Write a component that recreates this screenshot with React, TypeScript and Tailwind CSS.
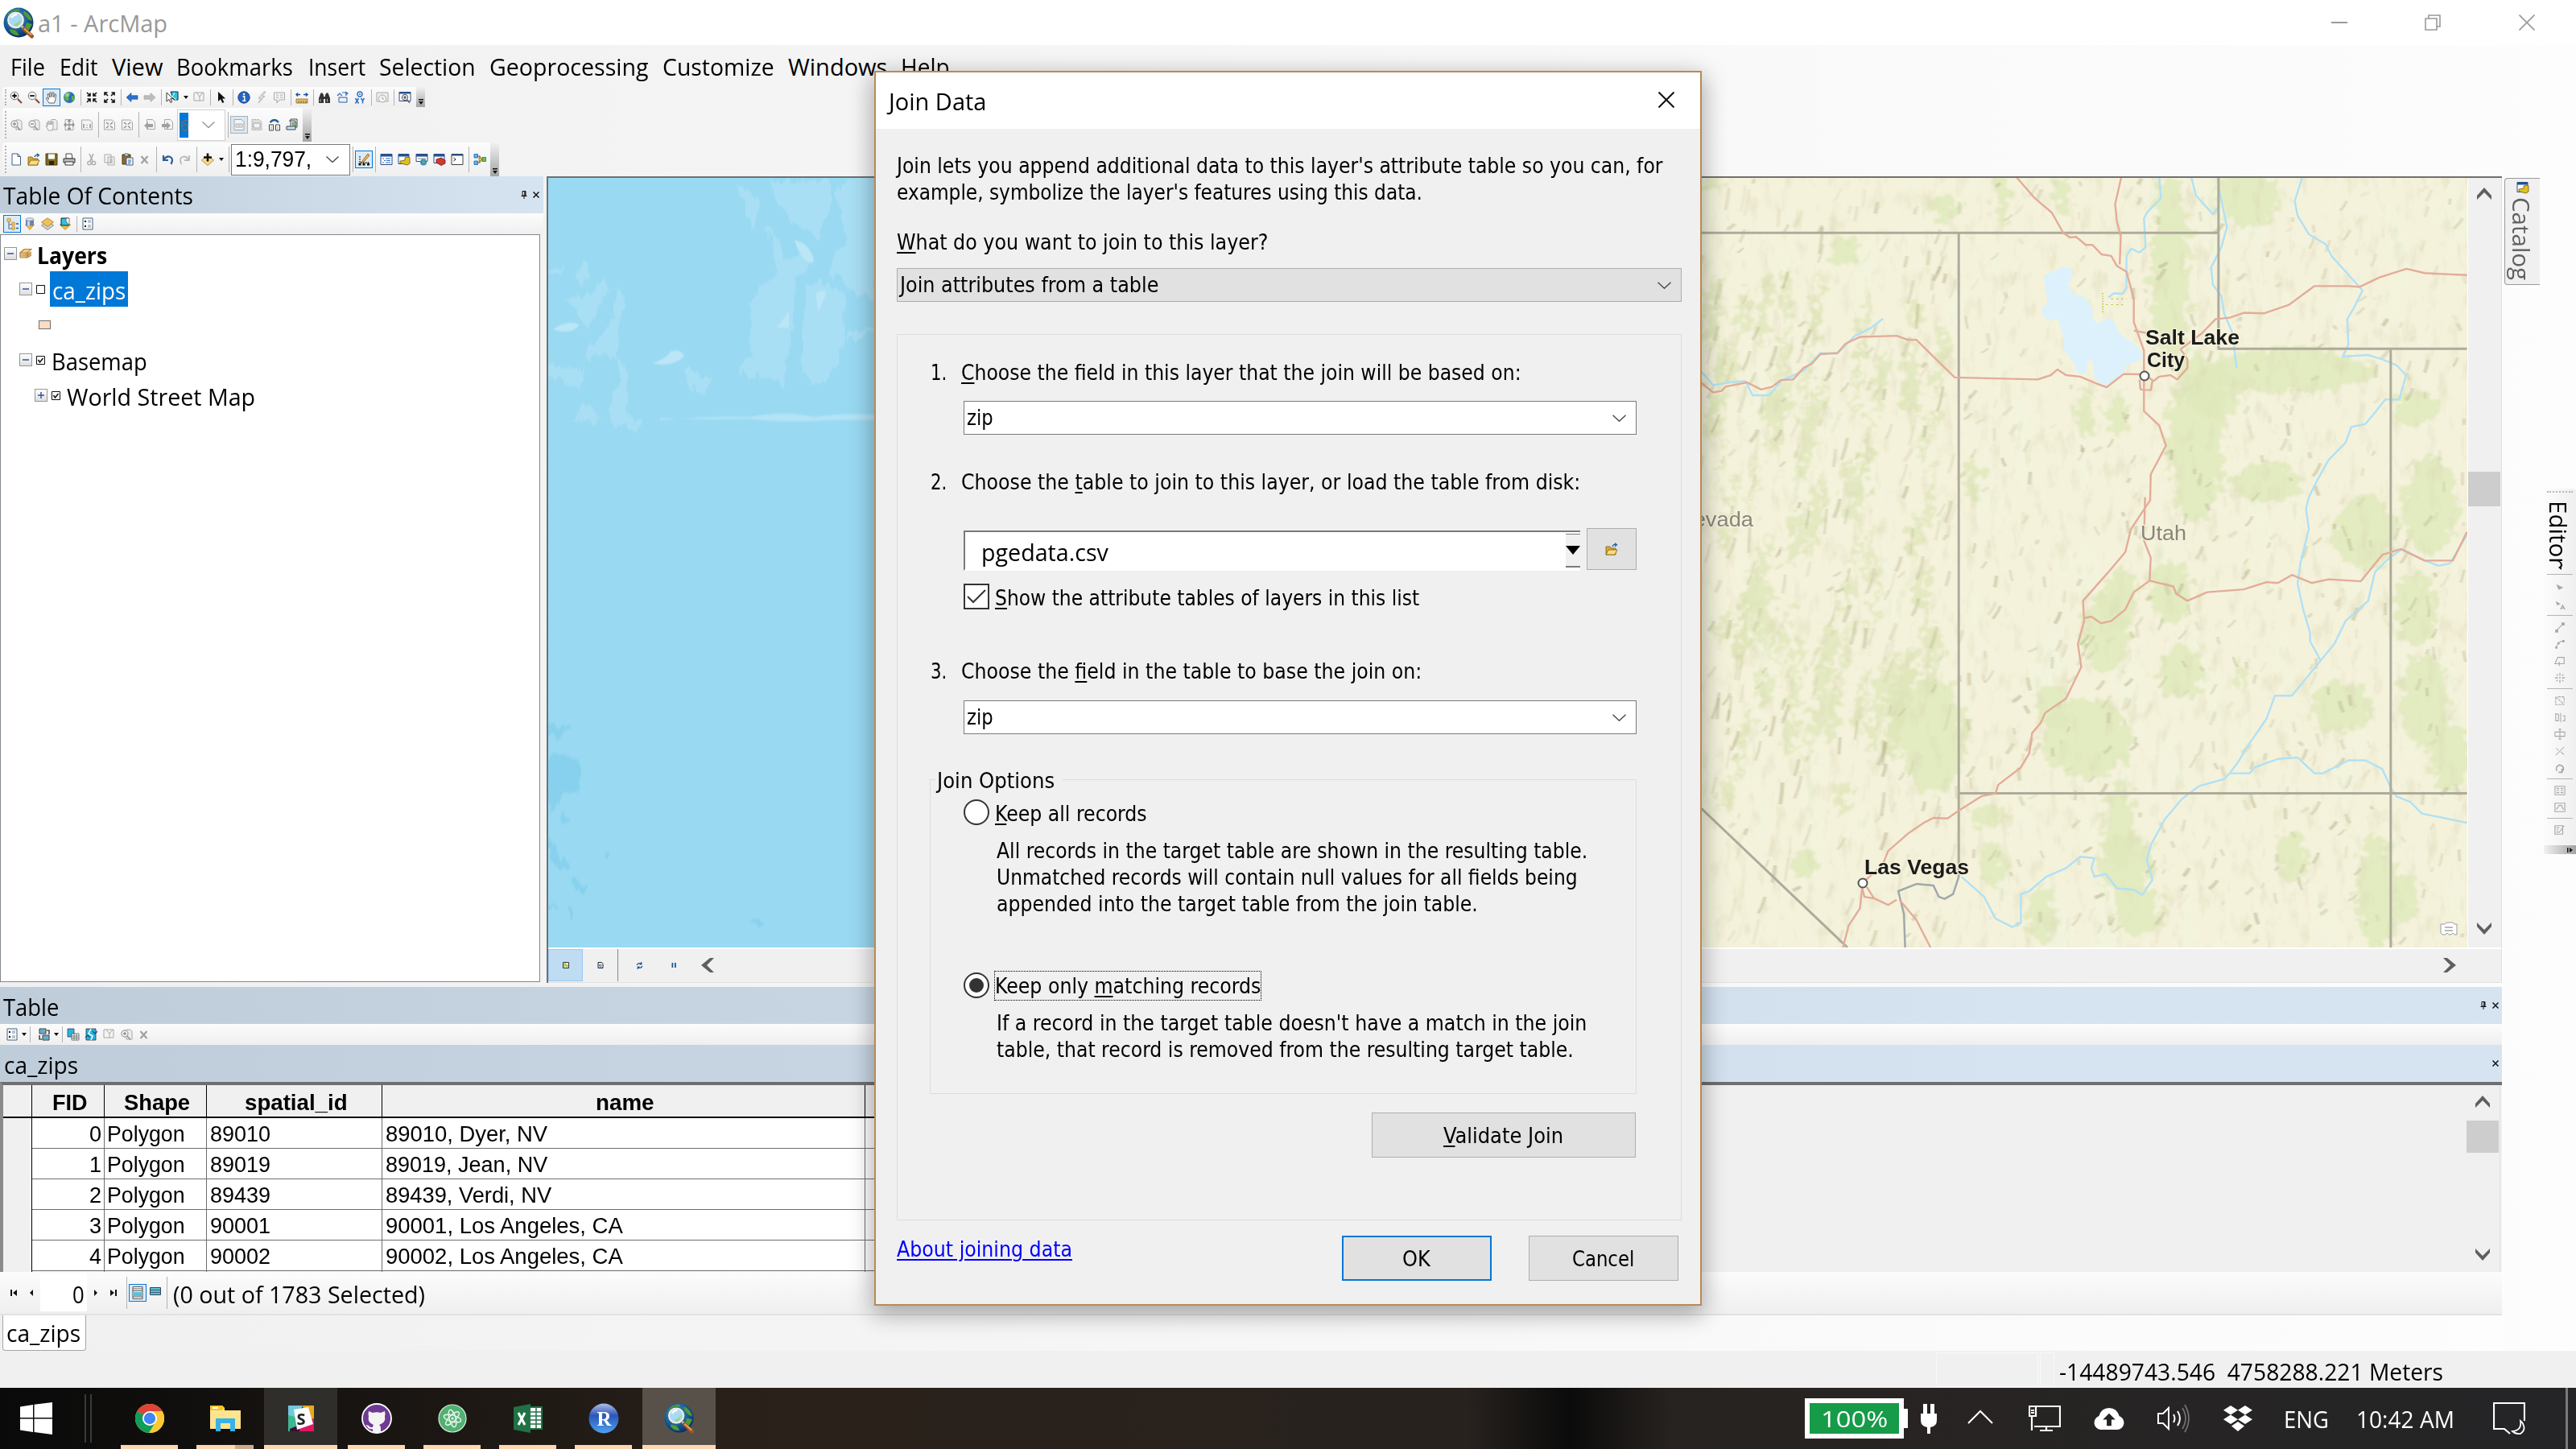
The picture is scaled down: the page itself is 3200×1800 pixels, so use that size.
import React, { useLayoutEffect, useRef, useState } from 'react';

const UI = "font-['Open_Sans','Noto_Sans',sans-serif]";
const TAH = "font-['DejaVu_Sans_Condensed','DejaVu_Sans',sans-serif]";
const ARI = "font-['Liberation_Sans',Arial,sans-serif]";

/** One line of text, condensed or stretched to fill the width of its box. */
function Fit({ className = '', children }: { className?: string; children: React.ReactNode }) {
  const outer = useRef<HTMLSpanElement>(null);
  const inner = useRef<HTMLSpanElement>(null);
  const [scale, setScale] = useState(1);
  useLayoutEffect(() => {
    if (outer.current && inner.current && inner.current.offsetWidth) {
      setScale(outer.current.clientWidth / inner.current.offsetWidth);
    }
  }, []);
  return (
    <span ref={outer} className={`block shrink-0 whitespace-pre ${className}`}>
      <span ref={inner} className="inline-block origin-left" style={{ transform: `scaleX(${scale})` }}>
        {children}
      </span>
    </span>
  );
}

function Svg({ children, className = 'size-4' }: { children: React.ReactNode; className?: string }) {
  return (
    <svg viewBox="0 0 16 16" fill="none" className={`shrink-0 ${className}`}>
      {children}
    </svg>
  );
}

const G = '#a8a8a8';

const icons: Record<string, React.ReactNode> = {
  zoomIn: (<><circle cx="6" cy="6" r="4.8" fill="#f4f4f4" stroke="#777" /><path d="M6 3.2v5.6M3.2 6h5.6" stroke="#111" strokeWidth="1.8" /><path d="M10 10l5 5" stroke="#8a4b3c" strokeWidth="2.2" /></>),
  zoomOut: (<><circle cx="6" cy="6" r="4.8" fill="#f4f4f4" stroke="#777" /><path d="M3.2 6h5.6" stroke="#111" strokeWidth="1.8" /><path d="M10 10l5 5" stroke="#8a4b3c" strokeWidth="2.2" /></>),
  hand: <path d="M5 15L1.5 9.5Q1 8 2.5 8.4L4.5 10.5 3 4Q3.5 2.6 4.6 3.8L6.2 8 5.8 2Q6.6.6 7.6 2L8.4 7.6 9.2 2Q10.2.8 10.9 2.2L10.8 8 12 4.2Q13.2 3.4 13.6 4.6L12.8 11 11.5 15z" fill="#fff" stroke="#555" strokeWidth=".9" />,
  globe: (<><circle cx="8" cy="8" r="7" fill="#2b6cc4" /><path d="M4 2.500Q9 1 10 3L7 7 8 10 5.500 13Q1 10 2 6zM11 6l4 1-1 4-3 2z" fill="#5fae3c" /><circle cx="5.500" cy="5" r="2.400" fill="#fff" opacity=".4" /></>),
  inArrows: <path d="M2 2l4 4M6 2.500V6H2.500M14 2l-4 4M10 2.500V6h3.500M2 14l4-4M2.500 10H6v3.500M14 14l-4-4M13.500 10H10v3.500" stroke="#111" strokeWidth="1.600" />,
  outArrows: <path d="M6 6L2 2M2 5.500V2h3.500M10 6l4-4M10.500 2H14v3.500M6 10l-4 4M2 10.500V14h3.500M10 10l4 4M14 10.500V14h-3.500" stroke="#111" strokeWidth="1.600" />,
  back: <path d="M1 8l6-5.500v3.200h8v4.600H7v3.200z" fill="#2e6fd0" stroke="#1c4b9c" strokeWidth=".6" />,
  fwd: <path d="M15 8L9 2.500v3.200H1v4.600h8v3.200z" fill="#bcbcbc" stroke="#a2a2a2" strokeWidth=".6" />,
  selFeat: (<><path d="M6 1h9v10h-5z" fill="#27c5e8" stroke="#222" /><path d="M11 2l-3 5 5 4" stroke="#fff" /><path d="M1 2v11l3-2.500 2 4 1.800-1-2-3.800H9z" fill="#fff" stroke="#222" strokeWidth=".9" /></>),
  clearSel: (<><path d="M2 2h12v10H2z" fill="#f4f4f4" stroke={G} /><path d="M5 2l4 5 4-5M9 7v5" stroke={G} /></>),
  arrow: <path d="M4 1v12l3-2.800 2.200 4.800 2.200-1L9.200 9.400h4z" fill="#111" />,
  info: (<><circle cx="8" cy="8" r="7.200" fill="#2465c0" stroke="#174490" /><path d="M6.500 6.800h2.200V12M6.300 12.200h4" stroke="#fff" strokeWidth="1.500" /><circle cx="8" cy="4" r="1.200" fill="#fff" /></>),
  bolt: <path d="M11 1L4 9h3.500L4 15l8-8.500H8.500L13 1z" fill="#e2e2e2" stroke={G} strokeWidth=".8" />,
  note: (<><path d="M1.500 2h13v9H8l-3 4v-4H1.500z" fill="#f3f3f3" stroke={G} /><path d="M4 5h3M9 5h3.500M4 8h3M9 8h3.500" stroke={G} /></>),
  ruler: (<><path d="M1 10h14v5H1z" fill="#e7c06a" stroke="#8b6a2b" strokeWidth=".8" /><path d="M4 12v3M7 12v3M10 12v3M13 12v3" stroke="#6e5120" strokeWidth=".8" /><path d="M1 4.500h5M15 4.500h-5M3 2.500L1 4.500l2 2M13 2.500l2 2-2 2" stroke="#1d4f9d" strokeWidth="1.400" /></>),
  binoc: (<><path d="M1 15V9l2.500-6.500h2L7 5v10H1zM15 15V9l-2.500-6.500h-2L9 5v10h6z" fill="#333" /><path d="M7 7h2v3H7z" fill="#333" /><path d="M3 10v3.500M11.500 10v3.500" stroke="#bbb" /></>),
  route: (<><path d="M4 8v6h10V8z" fill="#e9f2fb" stroke="#2b5f9c" /><path d="M2 6l3-3 3 3M8 2h5v4M12 1l3 2-3 2" stroke="#2b6cc4" strokeWidth="1.200" /></>),
  xy: (<><circle cx="8" cy="4" r="3" stroke="#2b6cc4" strokeWidth="1.400" /><circle cx="8" cy="4" r="1" fill="#2b6cc4" /><path d="M2.500 9l4 6.500M6.500 9l-4 6.500M9.500 9l2 3.200L13.500 9M11.500 12v3.500" stroke="#2b6cc4" strokeWidth="1.500" /></>),
  clock: (<><path d="M1 2h14v11H1z" fill="#eee" stroke={G} /><circle cx="8" cy="9.500" r="4.500" fill="#f6f6f6" stroke={G} /><path d="M8 7v3h2" stroke={G} /></>),
  viewer: (<><path d="M1 1.500h14v11H1z" fill="#fff" stroke="#27508f" /><path d="M1 2.500h14" stroke="#27508f" strokeWidth="2" /><circle cx="8" cy="8" r="3.600" fill="#fff" stroke="#444" /><path d="M8 6v4M6 8h4M10.500 10.500L14 15" stroke="#444" strokeWidth="1.200" /></>),
  gZoomIn: (<><path d="M8 2h5l2 2v10H8z" fill="#eee" stroke={G} /><circle cx="6" cy="7" r="4" fill="#f6f6f6" stroke={G} strokeWidth="1.400" /><path d="M6 5v4M4 7h4M9 10l4 4.500" stroke="#909090" strokeWidth="1.400" /></>),
  gZoomOut: (<><path d="M8 2h5l2 2v10H8z" fill="#eee" stroke={G} /><circle cx="6" cy="7" r="4" fill="#f6f6f6" stroke={G} strokeWidth="1.400" /><path d="M4 7h4M9 10l4 4.500" stroke="#909090" strokeWidth="1.400" /></>),
  gHand: (<><path d="M8 1.500h5l2 2V14H8z" fill="#eee" stroke={G} /><path d="M4 15L1 9l2 1-1-5 2 3V3l2 5 .5-5L8 8l2-4v7l-1 4z" fill="#f6f6f6" stroke={G} /></>),
  gMove: (<><path d="M3 1.500h8l2 2v11H3z" fill="#f4f4f4" stroke={G} /><path d="M8 2v12M2 8h12M6 4l2-2 2 2M6 12l2 2 2-2M4 6L2 8l2 2M12 6l2 2-2 2" stroke="#909090" strokeWidth="1.300" /></>),
  gOne: (<><path d="M1.500 2h10l3 3v9h-13z" fill="#f4f4f4" stroke={G} /><path d="M4 7v5M12 7v5M8 8v1M8 11v1" stroke="#909090" strokeWidth="1.500" /></>),
  gIn: (<><path d="M1.500 2h10l3 3v9h-13z" fill="#f4f4f4" stroke={G} /><path d="M4 5l3 2.500M12 5L9 7.500M4 12l3-2.500M12 12L9 9.500" stroke="#909090" strokeWidth="1.600" /></>),
  gBack: (<><path d="M4.500 1.500h7l3 3v9h-10z" fill="#f4f4f4" stroke={G} /><path d="M1 9l5-4.500V7h6v4H6v2.500z" fill="#a0a0a0" /></>),
  gFwd: (<><path d="M4.500 1.500h7l3 3v9h-10z" fill="#f4f4f4" stroke={G} /><path d="M12 9L7 4.500V7H1v4h6v2.500z" fill="#a0a0a0" /></>),
  gDoc: (<><path d="M2 1.500h9l3 3v10H2z" fill="#f4f4f4" stroke={G} /><path d="M4 7h8v4H4zM6 9h4" stroke={G} /></>),
  gDots: (<><path d="M2 1.500h9l3 3v10H2z" fill="#ddd" stroke={G} strokeDasharray="2 1" /><path d="M4 6h8v6H4z" fill="#f4f4f4" stroke={G} /></>),
  pages: (<><path d="M1.500 8h5v7h-5zM9.500 8h5v7h-5z" fill="#fff" stroke="#444" /><path d="M2.500 5Q8-1 13 5" stroke="#1d5f9d" strokeWidth="2.400" /><path d="M4 10v4M12 10v4" stroke="#6b6" /></>),
  stack: (<><path d="M6 1h8v10H6zM4 3h8v8" fill="#fff" stroke="#444" /><path d="M8 5h5v4H8z" fill="#8bc07a" stroke="#366" strokeWidth=".6" /><path d="M1 10h11v4H1z" fill="#cfe0f0" stroke="#345" /></>),
  newDoc: <path d="M3 1h7l3.500 3.500V15H3zM10 1v3.500h3.500" fill="#fff" stroke="#44607c" />,
  open: (<><path d="M1 5h5l1 2h6v8H1z" fill="#d9a93a" stroke="#7d5a14" strokeWidth=".8" /><path d="M1 15l3-6h11l-3 6z" fill="#f9dd7a" stroke="#7d5a14" strokeWidth=".8" /><path d="M9 5q1-3 4-2.500M12 .8l2.500 2L12 4.600" stroke="#1d5fae" strokeWidth="1.300" /></>),
  save: (<><path d="M1 1h14v14H1z" fill="#7c6a22" stroke="#4c4010" /><path d="M4 1.500h8v6H4z" fill="#fff" /><path d="M5 10h6v5H5z" fill="#2c2508" /></>),
  print: (<><path d="M4 1h7l1 6H4z" fill="#fff" stroke="#444" /><path d="M1 7h14v5H1z" fill="#b9bcc0" stroke="#333" /><path d="M3 11h10v4H3z" fill="#fff" stroke="#333" /></>),
  cut: (<><path d="M5 1l4 9M10 1L6 10" stroke={G} strokeWidth="1.500" /><circle cx="5" cy="12.500" r="2.200" stroke={G} strokeWidth="1.300" /><circle cx="10.500" cy="12.500" r="2.200" stroke={G} strokeWidth="1.300" /></>),
  copy: <path d="M2 2h8v10H2zM6 5h8v10H6zM8 8h4M8 10h4M8 12h4" fill="#f3f3f3" stroke={G} />,
  paste: (<><path d="M2 2h10v12H2z" fill="#8b6a2f" stroke="#4a3712" /><path d="M5 .8h4v3H5z" fill="#d8d8d8" stroke="#444" strokeWidth=".6" /><path d="M7 6h8v9H7z" fill="#fff" stroke="#345c94" /><path d="M9 9h4M9 11h4M9 13h3" stroke="#345c94" /></>),
  del: <path d="M3.500 4l8 9M11.500 4l-8 9" stroke="#a0a0a0" strokeWidth="2.200" />,
  undo: <path d="M3 3v6h6M3.500 8.500Q7 3 11.500 5t1 9" stroke="#2b5f9c" strokeWidth="2.200" />,
  redo: <path d="M13 3v6H7M12.500 8.500Q9 3 4.500 5t-1 9" stroke="#b9b9b9" strokeWidth="1.800" />,
  addData: (<><path d="M8 3l7.500 6L8 15.500.5 9z" fill="#fbd98a" stroke="#a07a2c" strokeWidth=".8" /><path d="M8 .5v10M3 5.500h10" stroke="#111" strokeWidth="2.600" /></>),
  edit: (<><path d="M3 4v8h11" stroke="#111" strokeDasharray="1.500 1.500" strokeWidth="1.300" /><path d="M1.500 12.500h3v3h-3zM6.500 12.500h3v3h-3zM12 12.500h3v3h-3z" fill="#111" /><path d="M6 10L13 1l2 2-7 8-2.500 1z" fill="#f5b942" stroke="#8a4a1a" strokeWidth=".8" /></>),
  winList: (<><path d="M1 1.500h14v13H1z" fill="#fff" stroke="#27508f" /><path d="M1 3h14" stroke="#27508f" strokeWidth="3" /><path d="M3 7h2M7 7h6M5 9.500h2M8 9.500h5M3 12h2M7 12h6" stroke="#2b6cc4" strokeWidth="1.200" /></>),
  winCat: (<><path d="M1 1.500h13v12H1z" fill="#fff" stroke="#27508f" /><path d="M1 3h13" stroke="#27508f" strokeWidth="3" /><path d="M9 6l4-1 2 1v7l-3 2-4-1-5-1v-3l6-1z" fill="#e0c020" stroke="#6b5a0a" strokeWidth=".8" /></>),
  winSearch: (<><path d="M1 1.500h14v9H1z" fill="#fff" stroke="#27508f" /><path d="M1 3h14" stroke="#27508f" strokeWidth="3" /><path d="M3 7h10" stroke="#888" /><circle cx="10" cy="11.500" r="4" fill="#3a8cc8" /><path d="M8 10l3-1 1 3-2 2z" fill="#69b34c" /></>),
  winTool: (<><path d="M1 1.500h13v11H1z" fill="#fff" stroke="#27508f" /><path d="M1 3h13" stroke="#27508f" strokeWidth="3" /><path d="M4 8l6-2 5 3v4l-5 2.500L4 12z" fill="#cf3a32" stroke="#6d1512" strokeWidth=".8" /></>),
  winPy: (<><path d="M1 1.500h14v13H1z" fill="#fff" stroke="#444" /><path d="M1 2.500h14" stroke="#27508f" strokeWidth="2" /><path d="M3.500 6l2.500 2-2.500 2" stroke="#111" /></>),
  model: (<><path d="M5 4h3v8H5M8 8h3" stroke="#555" strokeWidth="1.200" /><path d="M1 1.500h4.500v4.500H1zM1 10h4.500v4.500H1z" fill="#5db3ea" stroke="#1f659c" strokeWidth=".8" /><path d="M7 6h3v4H7z" fill="#f2d44c" stroke="#8a6d10" strokeWidth=".8" /><path d="M11 5.500h4.500v5H11z" fill="#72c05a" stroke="#2f7320" strokeWidth=".8" /></>),
  tocDraw: (<><circle cx="4" cy="3.500" r="2.500" fill="#f0c15a" stroke="#a97b1e" strokeWidth=".6" /><path d="M4 6v8h4M4 9h4" stroke="#7a93ad" strokeWidth="1.600" /><circle cx="9.500" cy="8" r="2.200" fill="#f0c15a" stroke="#a97b1e" strokeWidth=".6" /><circle cx="9.500" cy="13.500" r="2.200" fill="#f0c15a" stroke="#a97b1e" strokeWidth=".6" /><path d="M13 8h3M13 13.500h3" stroke="#1f5f9c" strokeWidth="1.500" /></>),
  tocSource: (<><path d="M2.500 9h11L8 15.500z" fill="#f0b84a" stroke="#a97b1e" strokeWidth=".6" /><path d="M3 2.500h10v8H3z" fill="#6d84a6" /><path d="M5 2.500h3v8H5z" fill="#c9d6e8" /><ellipse cx="8" cy="2.500" rx="5" ry="1.800" fill="#dfe7f1" stroke="#55698a" strokeWidth=".6" /></>),
  tocVis: (<><path d="M.5 10L8 15.500 15.500 10 8 5z" fill="#d0d0d0" stroke="#777" strokeWidth=".8" /><path d="M.5 6L8 .8 15.500 6 8 11.500z" fill="#f0c15a" stroke="#a97b1e" strokeWidth=".8" /></>),
  tocSel: (<><path d="M1 9l7 6.500L15 9z" fill="#f0b84a" stroke="#a97b1e" strokeWidth=".6" /><path d="M3 1h9v9H3z" fill="#27c5e8" stroke="#222" /><path d="M9 1h4v9L9 5z" fill="#fff" stroke="#444" strokeWidth=".7" /></>),
  tocOpt: (<><path d="M2 1h12v14H2z" fill="#fff" stroke="#44607c" /><circle cx="5" cy="5" r="1.200" fill="#222" /><circle cx="5" cy="11" r="1.200" fill="#222" /><path d="M8 4h4M8 6h4M8 10h4M8 12h4" stroke="#6b8db3" /></>),
  related: (<><path d="M2 1h8v6H2zM6 9h8v6H6z" fill="#8fd0e8" stroke="#333" /><path d="M2 3h8M2 5h8M6 11h8M6 13h8" stroke="#2a7a9c" strokeWidth=".8" /><path d="M11 3h3v5M2 9v5h3" stroke="#111" strokeWidth="1.200" /></>),
  selTable: (<><path d="M1 1h8v10H1z" fill="#27b5e0" stroke="#345" strokeWidth=".8" /><path d="M6 7h9v8H6zM6 10h9M6 12.500h9M9 7v8M12 7v8" fill="#fff" stroke="#555" strokeWidth=".8" /></>),
  swSel: (<><path d="M2 1h12v14H2z" fill="#27b5e0" stroke="#333" strokeWidth=".8" /><path d="M8 1l-3 6 5 3-2 5" stroke="#fff" strokeWidth="1.500" /><path d="M1 12l3-3 3 3M10 4l3 3 3-3" stroke="#1a4c94" strokeWidth="1.300" /></>),
  all: (<><path d="M2 .5h12v15H2z" fill="#fff" stroke="#555" /><path d="M2 3h12M2 5.500h12M2 13h12" stroke="#555" /><path d="M2.500 7h11v5h-11z" fill="#5cc0d8" /></>),
  selOnly: (<><path d="M1.500 1.500h13v9h-13z" fill="#5cc0d8" stroke="#345" /><path d="M2 4.500h12M2 7.500h12" stroke="#345" strokeWidth=".8" /></>),
  layers: <path d="M1 13h9l5-3M1 11h9l5-3M1 9h9l5-3M1 7l5-4.500h9L10 7zM1 13V7M10 13V7" fill="#f6cf80" stroke="#b07a2c" strokeWidth="1.100" />,
  dataView: (<><path d="M1 1h14v14H1z" fill="#fff" stroke="#333" strokeWidth="2" /><path d="M3 3h6l-3 10H3zM9 6h4v7H8z" fill="#9bbd3c" /></>),
  layoutView: (<><path d="M2 1h9l3 4v10H2z" fill="#fff" stroke="#222" strokeWidth="2" /><path d="M5 6h5v4H5zM5 12h6" stroke="#2b5f9c" strokeWidth="1.600" /></>),
  refresh: <path d="M2 7Q4 1 12 4M12 0v5H8M14 9Q12 15 4 12M4 16v-5h4" stroke="#1d5191" strokeWidth="2.200" />,
  pause: <path d="M3 2h3.500v12H3zM10 2h3.500v12H10z" fill="#1d5191" />,
};

const Icon = ({ n, className = 'size-4' }: { n: string; className?: string }) => <Svg className={className}>{icons[n]}</Svg>;

const Slot = ({ n, on }: { n: string; on?: boolean }) => (
  <div className={`flex w-[22px] shrink-0 items-center justify-center ${on ? 'h-[22px] border border-[#0078d7] bg-[#dcebf7]' : 'h-5'}`}>
    <Icon n={n} />
  </div>
);

const Sep = ({ className = 'h-5' }: { className?: string }) => (
  <div className="flex w-1.5 shrink-0 justify-center">
    <div className={`w-px bg-[#b4b4b4] ${className}`} />
  </div>
);

const Drop = ({ className = 'w-[11px]' }: { className?: string }) => (
  <div className={`flex shrink-0 items-center justify-center ${className}`}>
    <svg viewBox="0 0 6 4" className="h-1 w-1.5"><path d="M0 0h6L3 4z" fill="#111" /></svg>
  </div>
);

const Grip = () => <div className="mr-px ml-[3px] h-4/5 w-0.5 shrink-0 border-l-2 border-dotted border-[#b5b5b5]" />;

const Overflow = () => (
  <div className="flex w-[11px] shrink-0 items-end justify-center self-stretch bg-linear-to-b from-[#f2f2f2] to-[#a4a4a4] pb-[3px]">
    <svg viewBox="0 0 6 7" className="h-[7px] w-1.5"><path d="M0 0h6v1.500H0zM0 3h6L3 7z" fill="#111" /></svg>
  </div>
);

const Chev = ({ className = 'h-2 w-4' }: { className?: string }) => (
  <svg viewBox="0 0 16 8" fill="none" className={`shrink-0 ${className}`}><path d="M.5.5L8 7.500 15.500.5" stroke="#444" strokeWidth="1.300" /></svg>
);

const Fat = ({ dir }: { dir: 'up' | 'down' | 'left' | 'right' }) => {
  const d = { up: 'M0 12L9 2l9 10v5L9 8 0 17z', down: 'M0 1l9 9 9-9v5L9 16 0 6z', left: 'M12 0L1 9l11 9h5L8 9l9-9z', right: 'M1 0l9 9-9 9h5l11-9L6 0z' }[dir];
  return <svg viewBox="0 0 18 18" className="size-[18px] shrink-0"><path d={d} fill="#5f5f5f" /></svg>;
};

const ArcLogo = ({ className }: { className: string }) => (
  <svg viewBox="0 0 40 40" className={className}>
    <defs>
      <radialGradient id="glb" cx=".4" cy=".35" r=".7"><stop offset="0" stopColor="#3f9fd4" /><stop offset=".6" stopColor="#135a98" /><stop offset="1" stopColor="#0a2a58" /></radialGradient>
    </defs>
    <circle cx="20" cy="20" r="18.500" fill="url(#glb)" />
    <path d="M7 9Q14 2 22 3l-4 6-8 5-4 4zM26 5q9 4 11 13l-5-2-5-6zM30 20l7 2-5 9-4-5zM10 28l7 2 4 6q-9 0-12-6z" fill="#4f9a36" />
    <circle cx="16.500" cy="17" r="9.500" fill="#a9daf2" stroke="#e8eef2" strokeWidth="2.400" />
    <path d="M14 22q6-1 9-6-1 7-6 9z" fill="#9fd07c" />
    <path d="M11 14q3-4 7-4" stroke="#fff" strokeWidth="2.500" fill="none" />
    <circle cx="16.500" cy="17" r="10.900" fill="none" stroke="#4d5f6c" strokeWidth=".9" />
    <path d="M24 25l4 3" stroke="#ccc" strokeWidth="3" />
    <path d="M27 28l9.500 9" stroke="#a5551f" strokeWidth="5" strokeLinecap="round" />
    <path d="M27 27.500l9 8" stroke="#f2b681" strokeWidth="1.500" />
  </svg>
);

const menus: [string, string][] = [
  ['File', 'ml-[13px] w-[43px]'], ['Edit', 'ml-[18px] w-[48px]'], ['View', 'ml-[17px] w-[63px]'], ['Bookmarks', 'ml-[17px] w-[145px]'],
  ['Insert', 'ml-[19px] w-[71px]'], ['Selection', 'ml-[17px] w-[120px]'], ['Geoprocessing', 'ml-[17px] w-[198px]'],
  ['Customize', 'ml-[17px] w-[139px]'], ['Windows', 'ml-[17px] w-[123px]'], ['Help', 'ml-[17px] w-[61px]'],
];

function Toolbars() {
  const bar = 'flex items-center rounded-sm bg-linear-to-b from-[#fcfcfc] to-[#efefef] ml-[3px]';
  return (
    <div className="flex h-[111px] flex-col items-start gap-px">
      <div className={`${bar} h-[25px]`}>
        <Grip />
        <Slot n="zoomIn" /><Slot n="zoomOut" /><Slot n="hand" on /><Slot n="globe" /><Sep />
        <Slot n="inArrows" /><Slot n="outArrows" /><Sep /><Slot n="back" /><Slot n="fwd" /><Sep />
        <Slot n="selFeat" /><Drop /><Slot n="clearSel" /><Sep /><Slot n="arrow" /><Sep />
        <Slot n="info" /><Slot n="bolt" /><Slot n="note" /><Sep /><Slot n="ruler" /><Sep />
        <Slot n="binoc" /><Slot n="route" /><Slot n="xy" /><Sep /><Slot n="clock" /><Sep /><Slot n="viewer" />
        <div className="w-[3px]" /><Overflow />
      </div>
      <div className={`${bar} h-[42px]`}>
        <Grip />
        <Slot n="gZoomIn" /><Slot n="gZoomOut" /><Slot n="gHand" /><Slot n="gMove" /><Slot n="gOne" /><Sep className="h-8" />
        <Slot n="gIn" /><Slot n="gIn" /><Sep className="h-8" /><Slot n="gBack" /><Slot n="gFwd" />
        <div className="ml-px flex h-[39px] w-[60px] shrink-0 items-center border border-[#cfcfcf] bg-white pl-0.5">
          <div className={`flex h-[31px] w-[11px] items-center bg-[#0078d7] text-[20px] leading-[31px] text-[#6d6d6d] ${UI}`}><Fit className="w-[11px]">6</Fit></div>
          <div className="flex flex-1 justify-center pl-1 opacity-60"><Chev /></div>
        </div>
        <Sep className="h-8" />
        <div className="flex size-[22px] items-center justify-center border border-[#a5b4c0] bg-[#dbe6ee]"><Icon n="gDoc" /></div>
        <Slot n="gDots" /><Slot n="pages" /><Slot n="stack" />
        <div className="w-0.5" /><Overflow />
      </div>
      <div className={`${bar} h-[42px]`}>
        <Grip />
        <Slot n="newDoc" /><Slot n="open" /><Slot n="save" /><Slot n="print" /><Sep className="h-8" />
        <Slot n="cut" /><Slot n="copy" /><Slot n="paste" /><Slot n="del" /><Sep className="h-8" />
        <Slot n="undo" /><Slot n="redo" /><Sep className="h-8" /><Slot n="addData" /><Drop className="w-3" /><Sep className="h-8" />
        <div className="flex h-[39px] w-[148px] shrink-0 items-center justify-between border border-[#7a7a7a] bg-white pr-[13px] pl-[4px]">
          <Fit className={`w-[95px] text-[28px] leading-9 ${ARI}`}>1:9,797,</Fit>
          <Chev />
        </div>
        <Sep className="h-8" /><Slot n="edit" on /><Sep className="h-8" />
        <Slot n="winList" /><Slot n="winCat" /><Slot n="winSearch" /><Slot n="winTool" /><Slot n="winPy" /><Sep className="h-8" /><Slot n="model" />
        <div className="w-0.5" /><Overflow />
      </div>
    </div>
  );
}

const PinX = () => (
  <div className="flex items-center gap-[7px]">
    <svg viewBox="0 0 8 10" fill="none" className="h-2.5 w-2"><path d="M2 .5h4V6H2zM.5 6.500h7M4 6.500V10" stroke="#111" /><path d="M5 1v5" stroke="#111" strokeWidth="1.500" /></svg>
    <SmallX />
  </div>
);
const SmallX = () => (
  <svg viewBox="0 0 8 8" fill="none" className="size-2"><path d="M.5.5l7 7M7.500.5l-7 7" stroke="#111" strokeWidth="1.500" /></svg>
);

const Expander = ({ plus }: { plus?: boolean }) => (
  <div className="flex size-4 shrink-0 items-center justify-center border border-[#969696] bg-linear-to-b from-white to-[#dedede]">
    <svg viewBox="0 0 8 8" className="size-2"><path d={plus ? 'M0 4h8M4 0v8' : 'M0 4h8'} stroke="#33539e" strokeWidth="1.500" /></svg>
  </div>
);
const Tick = ({ on }: { on?: boolean }) => (
  <svg viewBox="0 0 11 11" fill="none" className="size-[11px] shrink-0"><path d="M.5.5h10v10H.5z" fill="#fff" stroke="#111" />{on && <path d="M2.500 5l2 3 4-5" stroke="#111" strokeWidth="1.600" />}</svg>
);

function Toc() {
  return (
    <div className={`flex h-[1001px] w-[675px] shrink-0 flex-col text-[29px] text-black ${UI}`}>
      <div className="flex h-[46px] items-center justify-between bg-linear-to-r from-[#bfcddb] to-[#d6e4f2] pr-[5px] pl-[4px]">
        <Fit className="w-[236px] pt-px">Table Of Contents</Fit>
        <PinX />
      </div>
      <div className="flex h-[26px] items-center bg-linear-to-b from-[#fcfcfc] to-[#efefef] pl-1">
        <Slot n="tocDraw" on /><Slot n="tocSource" /><Slot n="tocVis" /><Slot n="tocSel" /><Sep /><Slot n="tocOpt" />
      </div>
      <div className="mr-1 flex flex-1 flex-col border border-[#828790] bg-white pt-px">
        <div className="flex h-11 items-center gap-[3px] pl-1">
          <Expander /><Icon n="layers" /><Fit className="ml-[3px] w-[87px] pt-[3px] font-bold">Layers</Fit>
        </div>
        <div className="flex h-11 items-center pl-[23px]">
          <Expander /><div className="w-[5px]" /><Tick />
          <div className="ml-1.5 flex h-11 w-[97px] items-center bg-[#0078d7] pl-[3px] text-white"><Fit className="w-[91px] pt-[3px]">ca_zips</Fit></div>
        </div>
        <div className="flex h-11 items-center pl-[47px]"><div className="h-[11px] w-[15px] border border-[#6e6e6e] bg-[#fddcc4]" /></div>
        <div className="flex h-11 items-center pl-[23px]">
          <Expander /><div className="w-[5px]" /><Tick on /><Fit className="ml-[8px] w-[119px] pt-[3px]">Basemap</Fit>
        </div>
        <div className="flex h-11 items-center pl-[42px]">
          <Expander plus /><div className="w-[5px]" /><Tick on /><Fit className="ml-[8px] w-[234px] pt-[3px]">World Street Map</Fit>
        </div>
      </div>
    </div>
  );
}

/* Pseudo-random numbers with a fixed seed, so the terrain is always the same. */
function lcg(seed: number) {
  let s = seed;
  return () => ((s = (s * 1664525 + 1013904223) % 4294967296) / 4294967296);
}
const rnd = lcg(11);
const ridges = Array.from({ length: 700 }, () => {
  const x = 20 + rnd() * 1350;
  const y = 60 + rnd() * 2650;
  const h = 12 + rnd() * (x < 470 ? 80 : 35);
  const lean = x < 470 ? 2 + rnd() * 12 : rnd() * 24 - 8;
  return { d: `M${x.toFixed(0)} ${y.toFixed(0)}q${(-lean / 4).toFixed(0)} ${(h / 2).toFixed(0)} ${(-lean).toFixed(0)} ${h.toFixed(0)}`, o: 0.08 + rnd() * 0.34, w: 1 + rnd() * 1.6 };
});
const valleys = Array.from({ length: 80 }, () => {
  const x = 30 + rnd() * 430;
  const y = 400 + rnd() * 1850;
  return { x, y, rx: 4 + rnd() * 10, ry: 40 + rnd() * 120 };
});
const woods: [number, number, number, number][] = [
  [850, 380, 34, 330], [985, 130, 55, 100], [895, 960, 50, 300], [1060, 730, 150, 75], [700, 2010, 80, 140], [430, 2000, 60, 200], [272, 310, 26, 50],
  [450, 160, 24, 50], [1195, 1290, 55, 130], [1285, 1560, 40, 130], [1310, 1200, 50, 170], [760, 1520, 30, 110], [850, 1500, 36, 110], [735, 1650, 40, 140],
  [870, 1780, 40, 90], [760, 2300, 26, 160], [770, 2440, 50, 100], [795, 2610, 40, 90], [1215, 2540, 36, 200], [1265, 2560, 26, 90], [1065, 2420, 26, 90],
  [1150, 1900, 55, 90], [1300, 1880, 45, 160], [1345, 2080, 35, 120], [620, 2620, 26, 100], [535, 2450, 24, 80], [200, 2440, 24, 50], [500, 1110, 14, 90],
  [698, 880, 14, 90], [758, 880, 18, 80], [525, 2280, 30, 40], [975, 1790, 10, 60], [1020, 1120, 60, 70], [640, 1900, 30, 80], [550, 130, 12, 100],
  [35, 80, 20, 20], [1280, 860, 40, 60], [660, 120, 14, 70], [930, 800, 50, 90],
];
const border = ['M18 250H935', 'M935 55V653H1375', 'M1240 653V2736', 'M475 250V2490', 'M475 2200H1375', 'M18 2250L278 2736'];
const roads = [
  'M578 58L610 130 640 180 660 250 672 266 683 264 700 292 712 292 728 325 745 330 755 365 772 385 785 480 785 560 803 660 803 742',
  'M763 55L752 150 755 210 762 260 760 360',
  'M18 770L40 805 55 800 62 785 100 770 125 795 145 785 160 762 182 760 200 720 215 705 230 672 260 668 275 635 300 612 365 608 385 622 400 622 435 690 468 753L615 760 638 745 650 725 665 745 690 750 720 775 737 787 767 741 803 742',
  'M785 590L812 600M803 742L820 765 830 750 850 745 862 760 880 720 880 690 868 655 905 600 930 550 955 545 980 528 1015 530 1060 500 1105 435 1165 435 1185 438 1220 405 1268 375 1300 390 1375 397',
  'M795 760L797 795 815 797 818 765M803 750L803 870 830 920 842 990 815 1090 814 1180 780 1280 770 1360 740 1430 695 1530 697 1600 686 1680 692 1760 665 1870 628 1920 620 1955 605 1990 600 2060 585 2110 545 2170 540 2200 515 2210 475 2260 455 2287 430 2285 415 2300 385 2340 350 2400 340 2450 305 2510 300 2600 280 2660 270 2736',
  'M805 1170L803 1320 815 1380 813 1460 785 1500 770 1560 745 1600 727 1608 710 1585 697 1590',
  'M813 1460L855 1480 860 1505 880 1530 915 1500 980 1490 1020 1465 1040 1468 1065 1440 1100 1468 1130 1455 1187 1462 1225 1370 1258 1350 1300 1390 1350 1390 1375 1290',
  'M302 2515L308 2560 325 2565 350 2588 365 2570M312 2525L325 2565M370 2570L400 2640 425 2736',
];
const rivers = [
  'M830 58L833 130 808 180 803 200 806 300 795 318 780 305 772 330 772 440 765 462 750 460 740 475',
  'M887 58L895 120 925 185 935 160M935 90L950 230 940 300 922 370 925 430 940 470 945 530 960 600 967 720',
  'M1083 58L1070 140 1075 190 1095 255 1125 290 1135 330 1190 450 1175 510 1163 550 1165 640 1155 680 1200 675 1225 690 1250 710 1267 745 1255 830 1230 830 1210 880 1195 915 1170 925 1160 980 1130 1040 1110 1110 1095 1170 1090 1210 1095 1280 1080 1400 1075 1470 1085 1560 1097 1640 1097 1670 1115 1735',
  'M1375 1300L1345 1400 1325 1408 1300 1390 1260 1350 1235 1385 1212 1430 1200 1530 1160 1600 1150 1640 1140 1680 1115 1740 1090 1800 1065 1860 1035 1860 1020 1940 985 2040 970 2090 955 2130 945 2150 900 2175 870 2220 840 2290 815 2380 808 2430 818 2500 800 2553 785 2535 755 2530 735 2480 715 2490 710 2460 715 2425 690 2420 665 2460 630 2490 600 2540 585 2550 585 2650 570 2665 540 2635 520 2560 480 2490',
  'M955 2130L990 2130 1000 2108 1040 2080 1075 2075 1105 2130 1120 2130 1165 2085 1195 2085 1225 2115 1240 2180 1250 2210 1275 2230 1295 2270 1375 2302',
  'M18 730L40 780 70 770 97 765 110 815 140 815 160 765 200 730 230 668 260 670 290 610 320 580 341 548',
];
const shoals = [
  'M70 210q30-12 50-6t-50 12zM165 220q20-40 50-30 10 20-20 38zM130 265q60-15 95-12l40-28q20 0 25 14l-50 50-30 30-35-30zM210 350q60-20 90-50l30-60q20-5 16 22l-20 60-10 40q40 20 44 60l-6 50q30 20 60 22-10 20-60 10l-50-6q-20-20 0-60 40-20 20-60-60-20-114-8z',
  'M63 380q60 0 70 14l60 4q10 20-20 30-50-4-60-14l-50 0zM155 488q40-30 55-30l48 34q-50 6-103-4zM570 395q30-8 60 14l45 8q-20 18-60 16-40-10-45-38zM760 40q40 5 50 25l40 5q0 50-30 60l-15-30z',
  'M880 40l220-8q40 40 0 70l-30 50q-60-40-110-30-40-60-80-82zM860 125q50 0 80 60l70-10 40 20-60 24-10 80-30 80-6 48q-40-20-90-20l-80-8q20-25 50-30l-10-100q60-40 100-60l-15-60z',
  'M1130 60q40-40 150-28l0 230-60-10-110-40q20-50 70-65zM1030 235q80-15 140 15l-5 90q0 30-50 60l-40 25q-30-10-60-25-10-80 5-165zM1170 330l110-20v12l-100 20z',
];

function MapDrawing() {
  return (
    <svg viewBox="681 221 2384 956" preserveAspectRatio="none" className="block h-[956px] w-[2384px] shrink-0">
      <defs>
        <filter id="rough" x="-5%" y="-5%" width="110%" height="110%">
          <feTurbulence type="fractalNoise" baseFrequency=".06 .03" numOctaves="4" seed="4" result="n" />
          <feDisplacementMap in="SourceGraphic" in2="n" scale="60" xChannelSelector="R" yChannelSelector="G" />
          <feGaussianBlur stdDeviation="2.400" />
        </filter>
        <filter id="relief" x="0" y="0" width="100%" height="100%">
          <feTurbulence type="fractalNoise" baseFrequency=".07 .03" numOctaves="4" seed="9" />
          <feColorMatrix values="0 0 0 0 .70  0 0 0 0 .68  0 0 0 0 .45  0 2.600 0 0 -1.400" />
        </filter>
        <filter id="meadow" x="0" y="0" width="100%" height="100%">
          <feTurbulence type="fractalNoise" baseFrequency=".03 .009" numOctaves="3" seed="21" />
          <feColorMatrix values="0 0 0 0 .87  0 0 0 0 .92  0 0 0 0 .73  5 0 0 0 -2.800" />
        </filter>
        <filter id="shallow" x="-5%" y="-5%" width="110%" height="110%">
          <feTurbulence type="fractalNoise" baseFrequency=".035" numOctaves="3" seed="7" result="n" />
          <feDisplacementMap in="SourceGraphic" in2="n" scale="34" xChannelSelector="R" yChannelSelector="G" />
          <feGaussianBlur stdDeviation="2.200" />
        </filter>
        <filter id="soft"><feGaussianBlur stdDeviation="1.800" /></filter>
      </defs>
      <rect x="681" y="221" width="900" height="956" fill="#99d9f2" />
      <rect x="1580" y="221" width="1485" height="956" fill="#f5f2dc" />
      <rect x="2080" y="221" width="985" height="956" filter="url(#meadow)" opacity=".5" />
      <g transform="translate(2100 200) scale(.7015 .3571)">
        <g filter="url(#rough)">
          {woods.map(([x, y, rx, ry], i) => <ellipse key={i} cx={x} cy={y} rx={rx} ry={ry} fill="#dfe8ba" opacity=".8" />)}
          {valleys.map((v, i) => <ellipse key={i} cx={v.x} cy={v.y} rx={v.rx} ry={v.ry} transform={`rotate(4 ${v.x} ${v.y})`} fill="#dde6b8" opacity=".75" />)}
        </g>
        <g filter="url(#soft)">
          {ridges.map((r, i) => <path key={i} d={r.d} fill="none" stroke="#a39f72" strokeOpacity={r.o} strokeWidth={r.w * 1.8} vectorEffect="non-scaling-stroke" />)}
        </g>
      </g>
      <rect x="2080" y="221" width="985" height="956" filter="url(#relief)" opacity=".5" />
      <g transform="translate(2100 200) scale(.7015 .3571)" fill="none" strokeLinejoin="round">
        <path d="M625 400L640 385 660 368 675 375 675 410 668 425 675 460 700 475 705 500 712 515 712 550 722 565 740 545 750 560 760 600 785 635 800 665 800 690 770 712 768 735 735 785 715 755 712 690 703 700 700 745 685 735 678 700 662 660 660 610 650 550 635 555 622 535 622 515 632 490z" fill="#dcf1fc" />
        <path d="M730 460v70M745 480h28M736 500h30" stroke="#a8c832" strokeWidth="3" strokeDasharray="3 6" />
        {rivers.map((d) => <path key={d} d={d} stroke="#b0e1f5" strokeWidth="2.400" vectorEffect="non-scaling-stroke" />)}
        {border.map((d) => <path key={d} d={d} stroke="#aeab9c" strokeWidth="3" vectorEffect="non-scaling-stroke" />)}
        <path d="M475 2490L465 2550 450 2567 440 2560 430 2520 400 2515 368 2540 378 2620 380 2736" stroke="#9fa9a9" strokeWidth="2.500" vectorEffect="non-scaling-stroke" />
        {roads.map((d) => <path key={d} d={d} stroke="#e3ac99" strokeWidth="2.400" vectorEffect="non-scaling-stroke" />)}
      </g>
      <g transform="translate(660 200) scale(.3333 .657)">
        <g filter="url(#shallow)">{shoals.map((d) => <path key={d} d={d} fill="#a9dff4" />)}</g>
        <g filter="url(#soft)">
          <path d="M480 490q200-8 330-6 150-14 240 0 100-8 240-4v10q-120-2-240 2-150 2-240-4-180 2-330-2z" fill="#b2e3f6" />
          <path d="M80 318q60-20 100-8-30 20-100 8zM450 382q50-6 70-22 40-6 50 10-50 22-120 12zM980 150q60 5 75 40-40 10-75-40zM1060 250q30-10 40 0l-30 35zM915 315l45-30v30z" fill="#bbe6f6" />
        </g>
        <path filter="url(#shallow)" d="M63 1130q40-20 60 0 60 0 62 20l-6 40q-60 0-80 20-20 30-36 10zM63 1060q50 20 75 6 10 14-30 20l-45-4zM110 1230q30 0 40 10-20 20-40 10zM63 1280q20 0 30 30 50 20 44 30-40 0-74-20zM150 1362q50 4 55 14-20 14-55-6zM140 1410q20 0 24 10l-10 24zM275 1305q15 0 22 8-15 10-27 4zM815 1440q40-6 60 4-20 14-60 2zM63 1410q30 0 30 8h-30z" fill="#88d1ee" />
      </g>
      <g className={ARI} fill="#1c1c1c" fontSize="25" stroke="#f5f2dc" strokeWidth="2.500" paintOrder="stroke">
        <g fontWeight="bold">
          <text x="2665" y="428" textLength="117" lengthAdjust="spacingAndGlyphs">Salt Lake</text>
          <text x="2667" y="456" textLength="47" lengthAdjust="spacingAndGlyphs">City</text>
          <text x="2316" y="1086" textLength="130" lengthAdjust="spacingAndGlyphs">Las Vegas</text>
        </g>
        <g fill="#89867a">
          <text x="2659" y="671" textLength="57" lengthAdjust="spacingAndGlyphs">Utah</text>
          <text x="2084" y="654" textLength="94" lengthAdjust="spacingAndGlyphs">Nevada</text>
        </g>
      </g>
      <g fill="#fff" stroke="#555" strokeWidth="2"><circle cx="2664" cy="467" r="5.500" /><circle cx="2314" cy="1097" r="5.500" /></g>
      <path d="M3032 1148h5l2-2h8l2 2h3v13h-3l-2-2-2 2h-3l-2-2-2 2h-4l-2-2z" fill="#fff" stroke="#999" /><path d="M3037 1152h10M3037 1156h10" stroke="#777" />
    </svg>
  );
}

const VScroll = ({ className, thumb }: { className: string; thumb: string }) => (
  <div className={`flex shrink-0 flex-col items-center bg-[#f0f0f0] ${className}`}>
    <Fat dir="up" />
    <div className={`w-10 bg-[#cdcdcd] ${thumb}`} />
    <div className="flex-1" />
    <Fat dir="down" />
  </div>
);

function MapPane() {
  return (
    <div className="flex h-[1002px] w-[2429px] shrink-0 flex-col border-t-2 border-l-2 border-[#707070] bg-[#f0f0f0]">
      <div className="flex h-[956px]">
        <MapDrawing />
        <VScroll className="w-[43px] border-r border-l border-[#dfdfdf] border-l-white pt-[10px] pr-0.5 pb-[14px]" thumb="mt-[337px] h-[43px]" />
      </div>
      <div className="flex flex-1 items-start border-t-2 border-r border-b border-[#e2e2e2] border-t-white">
        <div className="flex h-[40px] w-[43px] items-center justify-center border border-[#99c9f2] bg-[#bfdcf2]"><Icon n="dataView" className="size-2" /></div>
        <div className="flex h-10 flex-1 items-center">
          <div className="flex w-[43px] justify-center"><Icon n="layoutView" className="size-2" /></div>
          <div className="h-10 w-px bg-[#858585]" />
          <div className="ml-[22px]"><Icon n="refresh" className="size-[9px]" /></div>
          <div className="ml-[34px]"><Icon n="pause" className="size-2" /></div>
          <div className="ml-[29px]"><Fat dir="left" /></div>
          <div className="flex-1" />
          <div className="mr-[55px]"><Fat dir="right" /></div>
        </div>
      </div>
    </div>
  );
}

const rows = [
  ['0', '89010', '89010, Dyer, NV', 'w-[201px]'],
  ['1', '89019', '89019, Jean, NV', 'w-[201px]'],
  ['2', '89439', '89439, Verdi, NV', 'w-[206px]'],
  ['3', '90001', '90001, Los Angeles, CA', 'w-[295px]'],
  ['4', '90002', '90002, Los Angeles, CA', 'w-[295px]'],
];

const NavBtn = ({ d }: { d: string }) => (
  <div className="flex w-[22px] justify-center"><svg viewBox="0 0 8 8" className="size-2"><path d={d} fill="#111" /></svg></div>
);

function TablePane() {
  const cols = 'grid grid-cols-[36px_90px_127px_218px_600px_1fr]';
  return (
    <div className={`flex h-[452px] flex-col text-[29px] text-black ${UI}`}>
      <div className="flex h-[46px] items-center justify-between bg-linear-to-r from-[#bfcddb] via-[#c9d7e5] via-40% to-[#d6e4f2] to-80% pr-1 pl-[4px]">
        <Fit className="w-[69px] pt-[3px]">Table</Fit><PinX />
      </div>
      <div className="flex h-[26px] items-center bg-linear-to-b from-[#fcfcfc] to-[#efefef] pl-1">
        <Slot n="tocOpt" /><Drop className="w-2" /><Sep /><div className="w-1" /><Slot n="related" /><Drop className="w-2" /><Sep />
        <Slot n="selTable" /><Slot n="swSel" /><Slot n="clearSel" /><Slot n="gZoomIn" /><Slot n="del" />
      </div>
      <div className="flex h-[46px] items-center justify-between bg-linear-to-r from-[#bfcddb] via-[#c9d7e5] via-40% to-[#d6e4f2] to-80% pr-[4px] pl-[5px]">
        <Fit className="w-[92px] pt-[3px]">ca_zips</Fit><SmallX />
      </div>
      <div className="flex h-[236px] border-t-4 border-l-4 border-t-[#6f6f6f] border-l-[#8a8a8a]">
        <div className={`w-[1600px] shrink-0 overflow-hidden text-[27px] ${ARI}`}>
          <div className={`${cols} h-[41px] border-b-2 border-black bg-[#f0f0f0] font-bold`}>
            <div className="border-r border-black" />
            <div className="flex items-center border-r border-black pt-0.5 pl-[25px]"><Fit className="w-[44px]">FID</Fit></div>
            <div className="flex items-center border-r border-black pt-0.5 pl-[24px]"><Fit className="w-[82px]">Shape</Fit></div>
            <div className="flex items-center border-r border-black pt-0.5 pl-[47px]"><Fit className="w-[128px]">spatial_id</Fit></div>
            <div className="flex items-center border-r border-black pt-0.5 pl-[265px]"><Fit className="w-[73px]">name</Fit></div>
            <div className="border-r border-black" />
          </div>
          {rows.map(([id, zip, name, w]) => (
            <div key={id} className={`${cols} h-[38px] border-b border-[#6e6e6e] bg-white`}>
              <div className="border-r border-b border-black bg-[#f0f0f0]" />
              <div className="flex items-center justify-end border-r border-[#6e6e6e] pr-[3px]"><Fit className="w-[15px]">{id}</Fit></div>
              <div className="flex items-center border-r border-[#6e6e6e] pl-[3px]"><Fit className="w-[97px]">Polygon</Fit></div>
              <div className="flex items-center border-r border-[#6e6e6e] pl-1"><Fit className="w-[75px]">{zip}</Fit></div>
              <div className="flex items-center border-r border-[#6e6e6e] pl-1"><Fit className={w}>{name}</Fit></div>
              <div />
            </div>
          ))}
        </div>
        <div className="flex-1 bg-[#f0f0f0]" />
        <VScroll className="w-[43px] pt-[11px] pb-3" thumb="mt-[15px] h-10" />
        <div className="w-[3px] border-l border-[#dfdfdf] bg-[#f0f0f0]" />
      </div>
      <div className="flex h-[54px] items-center border-b-2 border-[#e2e2e2] bg-linear-to-b from-[#fcfcfc] to-[#efefef] pl-[6px]">
        <NavBtn d="M0 0h2v8H0zM8 0v8L3 4z" /><NavBtn d="M6 0v8L2 4z" />
        <div className="flex h-[46px] w-[58px] items-center justify-end bg-white pr-[3px]"><Fit className="w-[15px] pt-[3px]">0</Fit></div>
        <NavBtn d="M2 0v8l4-4z" /><NavBtn d="M0 0v8l5-4zM6 0h2v8H6z" />
        <div className="w-0.5" />
        <Sep className="h-10" /><Slot n="all" on /><Slot n="selOnly" /><Sep className="h-10" />
        <Fit className="ml-[5px] w-[313px] pt-[3px]">(0 out of 1783 Selected)</Fit>
      </div>
      <div className="flex h-[44px] bg-linear-to-r from-[#f0f0f0] to-[#fdfdfd]">
        <div className="ml-[3px] h-[44px] w-[104px] rounded-b-sm border border-t-0 border-[#a5a5a5] bg-white pl-[4px]">
          <Fit className="w-[92px] leading-[44px]">ca_zips</Fit>
        </div>
      </div>
    </div>
  );
}

const sideIcons: (React.ReactNode | null)[] = [
  <path d="M3 3l10 5-7 3z" fill={G} />,
  <><path d="M2 3l7 4-5 2z" fill={G} /><path d="M9 15l3-6 3 6M10 13h4" stroke={G} strokeWidth="1.500" /></>,
  null,
  <path d="M3 13L13 3M2 12h3v3H2zM11 2h3v3h-3z" stroke={G} fill={G} strokeWidth="1.200" />,
  <path d="M3 14Q4 4 13 4M2 12h2v2H2zM5 6h2v2H5zM12 3h2v2h-2z" stroke={G} strokeWidth="1.200" />,
  <path d="M5 3h9v9H1zM7 9v6M4 12h6" stroke={G} strokeWidth="1.300" />,
  <path d="M8 1v4M8 11v4M1 8h4M11 8h4M3 3l2 2M13 3l-2 2M3 13l2-2M13 13l-2-2M7 8h2" stroke={G} strokeWidth="1.500" />,
  null,
  <path d="M2 3v11h12M2 3l12 11M5 3h9v8" stroke={G} strokeWidth="1.200" strokeDasharray="4 1" />,
  <path d="M2 3l4 1v9H2zM9 2v13M12 6h3v7h-3" stroke={G} strokeWidth="1.200" />,
  <path d="M1 5h14v6H1zM8 1v14M6 1h4M6 15h4" stroke={G} strokeWidth="1.200" />,
  <path d="M2 14L14 2M3 4l3 3M9 9l5 4" stroke={G} strokeWidth="1.200" />,
  <path d="M4 12a5 5 0 1 1 7 1M11 9v5H6" stroke={G} strokeWidth="2" />,
  null,
  <path d="M1 2h14v12H1zM3 5h4M9 5h4M3 8h4M9 8h4M3 11h4M9 11h4" stroke={G} strokeWidth="1.200" />,
  <path d="M1 2h14v12H1zM3 11l4-6h3l3 6" stroke={G} strokeWidth="1.300" />,
  null,
  <path d="M1 2h11v12H1zM3 5h4M3 8h3M3 11h5M8 10l6-8" stroke={G} strokeWidth="1.400" />,
];

function SideBars() {
  return (
    <div className={`flex flex-1 text-[29px] ${UI}`}>
      <div className="w-[52px] pt-[2px] pl-[3px]">
        <div className="flex h-[133px] w-[44px] flex-col items-center rounded-l-sm border border-r-0 border-[#9a9a9a] bg-[#f0f0f0] pt-[3px] text-[#606060]">
          <Icon n="winCat" />
          <span className="h-[108px] pt-[4px] pr-1 text-[29.500px] leading-[40px] [writing-mode:vertical-rl]">Catalog</span>
        </div>
      </div>
      <div className="flex flex-1 flex-col pt-[388px]">
        <div className="flex h-[443px] flex-col items-center rounded-sm bg-linear-to-r from-[#fcfcfc] to-[#efefef] pt-[3px]">
          <div className="w-8 border-t-2 border-dotted border-[#b5b5b5]" />
          <span className="mt-[10px] h-[79px] pr-1 text-[29.500px] leading-[36px] text-black [writing-mode:vertical-rl]">Editor</span>
          <svg viewBox="0 0 4 6" className="mt-px h-1.5 w-1 shrink-0"><path d="M4 0v6L0 3z" fill="#111" /></svg>
          <div className="mt-[5px] mb-[5px] h-px w-8 shrink-0 bg-[#b4b4b4]" />
          {sideIcons.map((p, i) =>
            p ? <div key={i} className="flex h-[21px] shrink-0 items-center"><Svg className="h-3.5 w-3.5">{p}</Svg></div> : <div key={i} className="my-[3px] h-px w-8 shrink-0 bg-[#b4b4b4]" />,
          )}
        </div>
        <div className="flex h-[11px] items-center justify-end bg-linear-to-r from-[#f2f2f2] to-[#a4a4a4] pr-1">
          <svg viewBox="0 0 7 6" className="h-1.5 w-[7px]"><path d="M0 0h1.500v6H0zM3 0v6l4-3z" fill="#111" /></svg>
        </div>
      </div>
    </div>
  );
}

const Combo = ({ children, w, className }: { children: React.ReactNode; w: string; className: string }) => (
  <div className={`flex h-[42px] items-center justify-between border pr-[12px] pl-[3px] ${className}`}>
    <Fit className={`${w} leading-[40px]`}>{children}</Fit>
    <Chev className="h-[9px] w-[17px]" />
  </div>
);

const Step = ({ n, w, className, children }: { n: string; w: string; className: string; children: React.ReactNode }) => (
  <div className={`ml-[41px] flex h-[33px] pt-px ${className}`}>
    <Fit className="mr-[18px] w-5">{n}</Fit>
    <Fit className={w}>{children}</Fit>
  </div>
);

const Key = ({ children }: { children: string }) => <span className="underline decoration-[1.500px] underline-offset-[3px]">{children}</span>;

function JoinDialog() {
  return (
    <div className={`absolute top-[88px] left-[1086px] flex h-[1534px] w-[1028px] flex-col border-2 border-[#b98a55] bg-[#f0f0f0] text-[26px] leading-[33px] text-black shadow-[0_8px_28px_2px_rgba(0,0,0,0.33)] ${TAH}`}>
      <div className={`flex h-[70px] items-center justify-between bg-white pr-[32px] pl-4 text-[29px] ${UI}`}>
        <Fit className="w-[121px]">Join Data</Fit>
        <svg viewBox="0 0 20 20" fill="none" className="mb-[3px] size-5"><path d="M.5.5l19 19M19.500.5l-19 19" stroke="#111" strokeWidth="2" /></svg>
      </div>
      <div className="flex flex-1 flex-col pr-[23px] pl-[26px]">
        <div className="mt-[30px]">
          <Fit className="w-[951px]">Join lets you append additional data to this layer's attribute table so you can, for</Fit>
          <Fit className="w-[653px]">example, symbolize the layer's features using this data.</Fit>
        </div>
        <Fit className="mt-[29px] w-[461px]"><Key>W</Key>hat do you want to join to this layer?</Fit>
        <Combo w="w-[321px]" className="mt-[15px] border-[#adadad] bg-[#e1e1e1]">Join attributes from a table</Combo>
        <div className="mt-10 flex h-[1101px] flex-col border border-[#dcdcdc]">
          <Step n="1." w="w-[696px]" className="mt-[30px]"><Key>C</Key>hoose the field in this layer that the join will be based on:</Step>
          <Combo w="w-[33px]" className="mt-[19px] mr-[55px] ml-[82px] border-[#7a7a7a] bg-white">zip</Combo>
          <Step n="2." w="w-[769px]" className="mt-[42px]">Choose the <Key>t</Key>able to join to this layer, or load the table from disk:</Step>
          <div className="mt-[41px] mr-[55px] ml-[82px] flex h-[53px] justify-between">
            <div className={`mt-[3px] flex w-[766px] border-2 border-r-0 border-b-white border-l-[#7a7a7a] border-t-[#7a7a7a] bg-white pl-[20px] text-[29px] ${UI}`}>
              <Fit className="w-[158px] pt-[8px]">pgedata.csv</Fit>
              <div className="flex-1" />
              <div className="my-0.5 flex w-[18px] items-center justify-end border-t border-b-2 border-t-[#7a7a7a] border-b-[#7a7a7a] bg-[#f0f0f0]">
                <svg viewBox="0 0 18 11" className="h-[11px] w-[18px]"><path d="M0 0h18L9 11z" fill="#000" /></svg>
              </div>
            </div>
            <div className="flex h-[52px] w-[62px] items-center justify-center border border-[#adadad] bg-[#e1e1e1]"><Icon n="open" /></div>
          </div>
          <div className="mt-4 ml-[82px] flex h-[33px]">
            <svg viewBox="0 0 32 32" fill="none" className="size-8"><path d="M1 1h30v30H1z" fill="#fff" stroke="#333" strokeWidth="2" /><path d="M5 16l7 7L27 8" stroke="#333" strokeWidth="2" /></svg>
            <Fit className="ml-[7px] w-[527px] pt-0.5"><Key>S</Key>how the attribute tables of layers in this list</Fit>
          </div>
          <Step n="3." w="w-[572px]" className="mt-[59px]">Choose the <Key>f</Key>ield in the table to base the join on:</Step>
          <Combo w="w-[33px]" className="mt-[20px] mr-[55px] ml-[82px] border-[#7a7a7a] bg-white">zip</Combo>
          <div className="mt-[56px] mr-[55px] ml-10 flex h-[391px] flex-col items-start border border-[#dcdcdc] pl-[41px]">
            <div className="-mt-[15px] -ml-[35px] bg-[#f0f0f0] pr-2.5 pl-0.5"><Fit className="w-[146px]">Join Options</Fit></div>
            <div className="mt-[6px] flex h-[33px]">
              <svg viewBox="0 0 32 32" className="size-8"><circle cx="16" cy="16" r="15" fill="#fff" stroke="#333" strokeWidth="2" /></svg>
              <Fit className="ml-[7px] w-[189px] pt-0.5"><Key>K</Key>eep all records</Fit>
            </div>
            <div className="mt-[15px] ml-[41px]">
              <Fit className="w-[734px]">All records in the target table are shown in the resulting table.</Fit>
              <Fit className="w-[722px]">Unmatched records will contain null values for all fields being</Fit>
              <Fit className="w-[598px]">appended into the target table from the join table.</Fit>
            </div>
            <div className="mt-[68px] flex h-[33px]">
              <svg viewBox="0 0 32 32" className="size-8"><circle cx="16" cy="16" r="15" fill="#fff" stroke="#333" strokeWidth="2" /><circle cx="16" cy="16" r="9" fill="#333" /></svg>
              <Fit className="-mt-px ml-[7px] h-[35px] w-[330px] pt-0.5 outline-1 outline-black outline-dotted">Keep only <Key>m</Key>atching records</Fit>
            </div>
            <div className="mt-[14px] ml-[41px]">
              <Fit className="w-[733px]">If a record in the target table doesn't have a match in the join</Fit>
              <Fit className="w-[717px]">table, that record is removed from the resulting target table.</Fit>
            </div>
          </div>
          <div className="mt-[23px] mr-[56px] flex h-14 w-[328px] items-center justify-center self-end border border-[#adadad] bg-[#e1e1e1]"><Fit className="mr-0.5 w-[149px] pt-0.5"><Key>V</Key>alidate Join</Fit></div>
        </div>
        <div className="mt-[19px] flex">
          <Fit className="w-[218px] pt-px text-[#0000ff]"><span className="underline decoration-2 underline-offset-[3px]">About joining data</span></Fit>
          <div className="ml-[335px] flex h-14 w-[186px] items-center justify-center border-2 border-[#0078d7] bg-[#e1e1e1]"><Fit className="mr-0.5 w-[35px] pt-0.5">OK</Fit></div>
          <div className="ml-[46px] flex h-14 w-[186px] items-center justify-center border border-[#adadad] bg-[#e1e1e1]"><Fit className="mr-0.5 w-[77px] pt-0.5">Cancel</Fit></div>
        </div>
      </div>
    </div>
  );
}

const apps: { bar: string; tile: string; art: React.ReactNode }[] = [
  { bar: 'w-[71px]', tile: 'w-[71px] ml-[36px]', art: (
    <svg viewBox="0 0 36 36" className="size-9"><circle cx="18" cy="18" r="18" fill="#fcc934" /><path d="M18 18L2.400 9A18 18 0 0 1 33.600 9H18z" fill="#db4437" /><path d="M2.400 9A18 18 0 0 0 17 36l8.500-14L18 18z" fill="#0f9d58" /><path d="M18 9h15.600A18 18 0 0 1 17 36l9-13.500z" fill="#fcc934" /><circle cx="18" cy="18" r="9" fill="#fff" /><circle cx="18" cy="18" r="7.200" fill="#4285f4" /></svg>) },
  { bar: 'w-[71px] border-r-[23px] border-[#c9aa8c]', tile: 'w-[71px] ml-[23px]', art: (
    <svg viewBox="0 0 38 32" className="h-[32px] w-[38px]"><path d="M0 0h15l3 3v3h20v23H0z" fill="#ffe48f" /><path d="M0 0h15l3 3-3 3H0z" fill="#f6c52c" /><path d="M3 2h7v2H3z" fill="#fff" /><path d="M7 16h24v16h-6V22H13v10H7z" fill="#38b2e8" /></svg>) },
  { bar: 'w-[91px]', tile: 'w-[91px] ml-[13px] bg-[#302e2a]', art: (
    <svg viewBox="0 0 32 32" className="size-8"><path d="M0 0h18l-6 14L0 20z" fill="#70cadb" /><path d="M18 0h14v22L20 14z" fill="#e9a820" /><path d="M0 12l9 2 8 18H0z" fill="#3eb890" /><path d="M12 20l20-4v16H14z" fill="#e01765" /><path d="M2 29l12-5v8H2z" fill="#361238" /><path d="M7 5l18-3 6 21-20 7z" fill="#fff" /><text x="16" y="24" textAnchor="middle" fontSize="20" fontWeight="bold" fill="#222" className={UI}>S</text></svg>) },
  { bar: 'w-[71px]', tile: 'w-[71px] ml-[13px]', art: (
    <svg viewBox="0 0 38 38" className="size-[38px]"><circle cx="19" cy="19" r="18" fill="#6e3a94" stroke="#fff" strokeWidth="1.800" /><path d="M9 10l5 2q5-1.500 10 0l5-2q1 4 0 6 2 8-7 11 2 1 2 5v5H14v-5q-5 1-7-3l-2-2q4 0 6 3h3q0-2 1-3-8-3-6-11-1-2 0-6z" fill="#f3f3f3" /></svg>) },
  { bar: 'w-[71px]', tile: 'w-[71px] ml-[23px]', art: (
    <svg viewBox="0 0 36 36" fill="none" className="size-9"><circle cx="18" cy="18" r="17" fill="#52b072" stroke="#d8f0df" strokeWidth="1.200" /><g stroke="#e8f7ec" strokeWidth="1.400"><ellipse cx="18" cy="18" rx="11" ry="4" transform="rotate(15 18 18)" /><ellipse cx="18" cy="18" rx="11" ry="4" transform="rotate(75 18 18)" /><ellipse cx="18" cy="18" rx="11" ry="4" transform="rotate(135 18 18)" /></g><circle cx="18" cy="18" r="1.500" fill="#fff" /></svg>) },
  { bar: 'w-[71px]', tile: 'w-[71px] ml-[23px]', art: (
    <svg viewBox="0 0 36 36" className="size-9"><path d="M20 4h15v27H20z" fill="#fff" stroke="#207245" strokeWidth="2" /><path d="M20 10h15M20 15h15M20 20h15M20 25h15M28 5v25" stroke="#207245" strokeWidth="1.500" /><path d="M0 4l21-4v36L0 32z" fill="#207245" /><path d="M6 11l8 15M14 11L6 26" stroke="#fff" strokeWidth="3" /></svg>) },
  { bar: 'w-[71px]', tile: 'w-[71px] ml-[23px]', art: (
    <svg viewBox="0 0 38 38" className="size-[38px]"><defs><linearGradient id="rg" x2="0" y2="1"><stop offset="0" stopColor="#aebfe8" /><stop offset=".4" stopColor="#2c56b8" /><stop offset="1" stopColor="#4ea2ee" /></linearGradient></defs><circle cx="19" cy="19" r="18.500" fill="url(#rg)" /><text x="19.500" y="27.500" textAnchor="middle" fontSize="25" fontWeight="bold" fill="#fff" className="font-['Liberation_Serif',serif]">R</text></svg>) },
  { bar: 'w-[91px]', tile: 'w-[91px] ml-[13px] bg-[#57514a]', art: <ArcLogo className="size-[39px]" /> },
];

function Taskbar() {
  return (
    <div className={`flex h-[76px] shrink-0 bg-linear-to-r from-[#0a0a0a] via-[#2a211a] via-30% to-[#252527] text-white ${UI}`}>
      <svg viewBox="0 0 40 40" className="mt-[18px] ml-[25px] size-10"><path d="M0 5.500L16 3v16H0zM17.500 2.800L40 0v19H17.500zM0 20.500h16V37L0 34.500zM17.500 20.500H40V40l-22.500-3z" fill="#fff" /></svg>
      <div className="mt-2 ml-10 h-[60px] w-[9px] border-x-2 border-[#3a3a3a]" />
      {apps.map((a, i) => (
        <div key={i} className={`flex h-[76px] shrink-0 flex-col items-center ${a.tile}`}>
          <div className="flex h-[71px] items-center pt-1">{a.art}</div>
          <div className={`h-[5px] bg-[#fdd6b2] ${a.bar}`} />
        </div>
      ))}
      <div className="ml-[930px] w-[260px] bg-linear-to-r from-transparent via-[#0b0b0b] to-transparent" />
      <div className="flex-1" />
      <div className="mr-[10px] flex items-center">
        <div className="flex h-[50px] w-[123px] items-center justify-center border-[6px] border-white bg-[#169b48]"><Fit className="w-[83px] text-[28px] leading-none">100%</Fit></div>
        <div className="h-6 w-[5px] bg-white" />
        <svg viewBox="0 0 22 37" className="ml-[15px] h-[37px] w-[22px]"><path d="M4 0h5v12h4V0h5v12h3v8q0 8-8 9v8H9v-8Q1 28 1 20v-8h3z" fill="#fff" /></svg>
        <svg viewBox="0 0 32 18" fill="none" className="mb-1 ml-[37px] h-[18px] w-8"><path d="M1 17L16 2l15 15" stroke="#fff" strokeWidth="2" /></svg>
        <svg viewBox="0 0 40 34" fill="none" className="ml-11 h-[34px] w-10"><path d="M10 2h29v25H7M1 2h8v12H1zM4 14v18M14 32h16M22 27v5M3 7h4M3 10h4" stroke="#fff" strokeWidth="2.200" /></svg>
        <svg viewBox="0 0 40 30" className="ml-10 h-[29px] w-10"><path d="M9 29a9 9 0 0 1-2-17.500Q10 1 20 1t13 10.500A9 9 0 0 1 31 29z" fill="#fff" /><path d="M20 8l8 8h-5v8h-6v-8h-5z" fill="#222" /></svg>
        <svg viewBox="0 0 40 36" fill="none" className="ml-10 h-9 w-10"><path d="M1 12h6l7-7v26l-7-7H1zM20 13q3 5 0 10M25 9q6 9 0 18" stroke="#fff" strokeWidth="2" /><path d="M31 5q8 13 0 26M34 1q10 17 0 34" stroke="#777" strokeWidth="1.600" /></svg>
        <svg viewBox="0 0 36 32" className="ml-[42px] h-8 w-9"><path d="M9 0l9 5.700-9 5.700-9-5.700zM27 0l9 5.700-9 5.700-9-5.700zM9 11.500l9 5.700-9 5.700-9-5.700zM27 11.500l9 5.700-9 5.700-9-5.700zM18 20l8 5.500L18 32l-8-6.500z" fill="#fff" /></svg>
        <Fit className="ml-[39px] w-14 pt-0.5 text-[29px]">ENG</Fit>
        <Fit className="ml-[34px] w-[122px] pt-0.5 text-[29px]">10:42 AM</Fit>
        <svg viewBox="0 0 40 40" fill="none" className="ml-12 size-10"><path d="M21 39l-7-6H1V1h38v22" stroke="#fff" strokeWidth="2.200" /><path d="M34 23q2 12-10 13 4 4 10 3 6-4 4-10-1-4-4-6z" stroke="#fff" strokeWidth="1.800" /></svg>
        <div className="ml-[50px] h-[76px] w-[3px] bg-[#7a7a7c]" />
      </div>
    </div>
  );
}

export default function App() {
  return (
    <div className="relative flex h-[1800px] w-[3200px] flex-col overflow-hidden bg-linear-to-r from-[#f0f0f0] to-[#fdfdfd]">
      <div className={`flex h-14 shrink-0 items-center bg-white text-[29px] text-[#999] ${UI}`}>
        <ArcLogo className="ml-[3px] size-10" />
        <Fit className="ml-[4px] w-[161px] pt-px">a1 - ArcMap</Fit>
        <div className="flex-1" />
        <div className="h-0.5 w-5 bg-[#999]" />
        <svg viewBox="0 0 20 20" fill="none" className="ml-24 size-5"><path d="M1 5h14v14H1zM5 5V1h14v14h-4" stroke="#999" strokeWidth="1.600" /></svg>
        <svg viewBox="0 0 20 20" fill="none" className="mr-[51px] ml-[97px] size-5"><path d="M.5.5l19 19M19.500.5l-19 19" stroke="#999" strokeWidth="1.600" /></svg>
      </div>
      <div className={`flex h-[52px] shrink-0 text-[29px] leading-[53px] text-black ${UI}`}>
        {menus.map(([label, w]) => <Fit key={label} className={w}>{label}</Fit>)}
      </div>
      <Toolbars />
      <div className="flex h-[1459px] shrink-0">
        <div className="w-[3108px] shrink-0">
          <div className="flex h-[1007px] gap-1"><Toc /><MapPane /></div>
          <TablePane />
        </div>
        <SideBars />
      </div>
      <div className={`flex h-[46px] shrink-0 items-center bg-[#f0f0f0] pl-[2405px] text-[29px] text-black ${UI}`}>
        <div className="h-[43px] w-[127px] border border-[#f8f8f8]" />
        <div className="ml-0.5 h-[43px] w-[18px] border border-[#f8f8f8]" />
        <Fit className="ml-1.5 w-[477px] pt-[5px]">-14489743.546  4758288.221 Meters</Fit>
      </div>
      <Taskbar />
      <JoinDialog />
    </div>
  );
}
